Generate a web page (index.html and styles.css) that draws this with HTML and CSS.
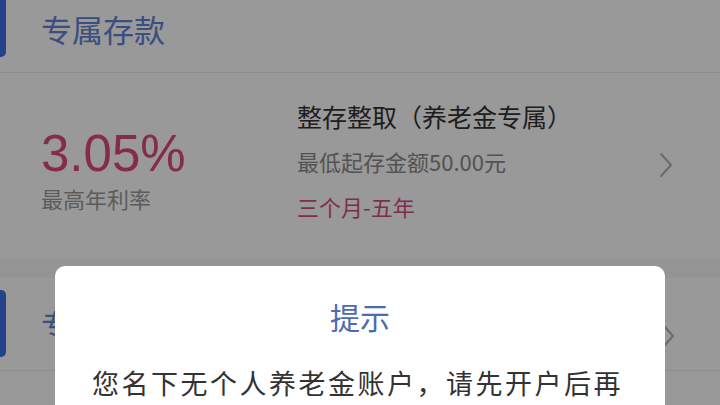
FILE: index.html
```html
<!DOCTYPE html>
<html lang="zh-CN">
<head>
<meta charset="utf-8">
<title>专属存款</title>
<link rel="stylesheet" href="styles.css">
</head>
<body>
<div class="page">
  <div class="sec-head first">
    <span class="bar"></span>
    <span class="sec-title">专属存款</span>
  </div>
  <div class="card">
    <div class="rate-col">
      <div class="rate">3.05%</div>
      <div class="rate-label">最高年利率</div>
    </div>
    <div class="info-col">
      <div class="prod-name">整存整取（养老金专属）</div>
      <div class="min-amt">最低起存金额50.00元</div>
      <div class="term">三个月-五年</div>
    </div>
    <svg class="chev" viewBox="0 0 14 26" width="14" height="26"><path d="M2 2 L12 13 L2 24" fill="none" stroke="#b3b3b3" stroke-width="2" stroke-linecap="round" stroke-linejoin="round"/></svg>
  </div>
  <div class="gap"></div>
  <div class="sec-head second">
    <span class="bar tall"></span>
    <span class="sec-title tall">专属理财</span>
    <svg class="chev chev2" viewBox="0 0 14 26" width="14" height="26"><path d="M2 2 L12 13 L2 24" fill="none" stroke="#b3b3b3" stroke-width="2" stroke-linecap="round" stroke-linejoin="round"/></svg>
  </div>
</div>
<div class="mask"></div>
<div class="dialog">
  <div class="dlg-title">提示</div>
  <div class="dlg-body">您名下无个人养老金账户，请先开户后再</div>
</div>
</body>
</html>
```
FILE: styles.css
```css
html, body {
  margin: 0;
  padding: 0;
  width: 720px;
  height: 405px;
  overflow: hidden;
  background: #ffffff;
  font-family: "Noto Sans CJK SC", "Noto Sans", sans-serif;
}
.page {
  width: 720px;
}
.sec-head {
  display: flex;
  align-items: flex-start;
  border-bottom: 1px solid #ececec;
  box-sizing: border-box;
}
.sec-head.first {
  height: 73px;
}
.sec-head.second {
  height: 93px;
  padding-top: 12px;
  position: relative;
}
.bar {
  width: 6px;
  height: 57px;
  background: #3d6ee6;
  border-radius: 0 0 5px 0;
}
.bar.tall {
  height: 67px;
  border-radius: 0 5px 5px 0;
}
.sec-title {
  margin-left: 35px;
  font-size: 31px;
  line-height: 57px;
  color: #6582d4;
}
.sec-title.tall {
  line-height: 67px;
}
.card {
  height: 186px;
  display: flex;
  align-items: flex-start;
  padding-left: 41px;
  box-sizing: border-box;
  position: relative;
}
.rate-col {
  width: 256px;
  padding-top: 53px;
}
.rate {
  font-family: "Liberation Sans", "Noto Sans", sans-serif;
  font-size: 51px;
  line-height: 56px;
  color: #e04a78;
}
.rate-label {
  margin-top: 1px;
  font-size: 22px;
  line-height: 30px;
  color: #999999;
}
.info-col {
  padding-top: 21px;
  flex: 1;
}
.prod-name {
  font-size: 25px;
  line-height: 45px;
  color: #333333;
}
.min-amt {
  font-size: 22px;
  line-height: 45px;
  color: #8a8a8a;
}
.term {
  font-size: 22px;
  line-height: 45px;
  color: #d24d80;
}
.chev {
  margin: 79px 47px 0 0;
}
.chev2 {
  margin: 33px 45px 0 auto;
}
.gap {
  height: 19px;
  background: #f7f7f7;
}
.mask {
  position: fixed;
  inset: 0;
  background: rgba(0, 0, 0, 0.4);
}
.dialog {
  position: fixed;
  left: 55px;
  top: 266px;
  width: 610px;
  height: 200px;
  background: #ffffff;
  border-radius: 10px;
  text-align: center;
}
.dlg-title {
  padding-top: 30px;
  font-size: 30px;
  line-height: 40px;
  color: #4b6cb0;
}
.dlg-body {
  margin-top: 27px;
  padding: 0 30px 0 37px;
  text-align: left;
  font-size: 27px;
  line-height: 40px;
  letter-spacing: 2.5px;
  color: #333333;
  white-space: nowrap;
}
```
